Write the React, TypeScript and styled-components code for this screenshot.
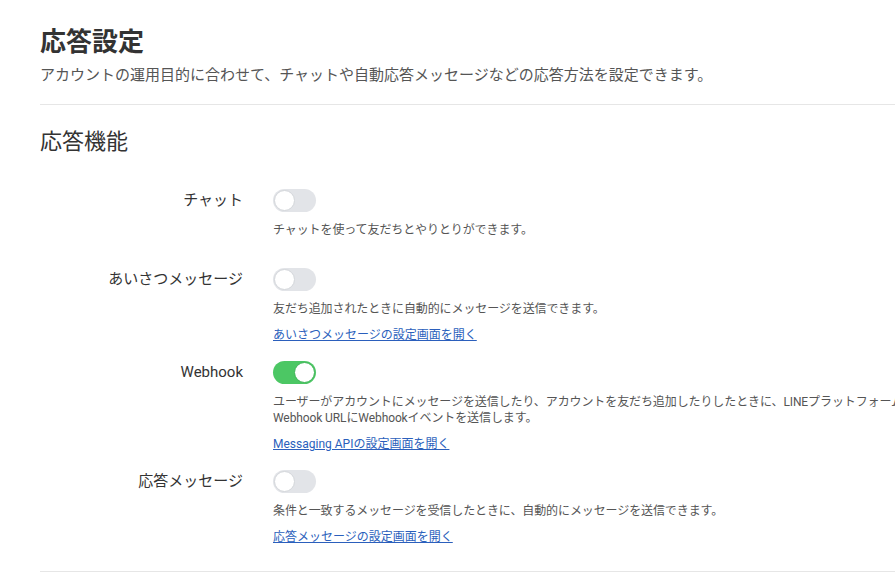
import styled, { createGlobalStyle } from 'styled-components'

const GlobalStyle = createGlobalStyle`
    html, body {
        margin: 0;
        padding: 0;
        background: #fff;
        overflow-x: hidden;
    }
    body {
        font-family: "Roboto", "Noto Sans CJK JP", sans-serif;
        color: #333;
    }
`

type Feature = {
    label: string
    enabled: boolean
    description: string
    link?: string
}

const features: Feature[] = [
    {
        label: 'チャット',
        enabled: false,
        description: 'チャットを使って友だちとやりとりができます。',
    },
    {
        label: 'あいさつメッセージ',
        enabled: false,
        description: '友だち追加されたときに自動的にメッセージを送信できます。',
        link: 'あいさつメッセージの設定画面を開く',
    },
    {
        label: 'Webhook',
        enabled: true,
        description:
            'ユーザーがアカウントにメッセージを送信したり、アカウントを友だち追加したりしたときに、LINEプラットフォームからWebhook URLにWebhookイベントを送信します。',
        link: 'Messaging APIの設定画面を開く',
    },
    {
        label: '応答メッセージ',
        enabled: false,
        description: '条件と一致するメッセージを受信したときに、自動的にメッセージを送信できます。',
        link: '応答メッセージの設定画面を開く',
    },
]

// Styles
const Page = styled.main`
    width: 1060px;
    padding: 24px 0 0 40px;
`

const Title = styled.h1`
    margin: 0;
    font-size: 26px;
    line-height: 36px;
    font-weight: 700;
    color: #333;
`

const Lead = styled.p`
    margin: 4px 0 0;
    font-size: 15px;
    line-height: 22px;
    color: #555;
`

const Divider = styled.hr`
    margin: 0;
    border: none;
    border-top: 1px solid #e6e6e6;
`

const HeaderDivider = styled(Divider)`
    margin-top: 18px;
`

const SectionTitle = styled.h2`
    margin: 22px 0 0;
    font-size: 22px;
    line-height: 30px;
    font-weight: 400;
    color: #333;
`

const FeatureList = styled.div`
    margin-top: 32px;
    padding-bottom: 24px;
    display: flex;
    flex-direction: column;
    gap: 16px;
`

const Row = styled.div`
    display: grid;
    grid-template-columns: 203px 1fr;
    column-gap: 30px;
`

const Label = styled.div`
    font-size: 15px;
    line-height: 23px;
    text-align: right;
    color: #333;
`

const Body = styled.div`
    display: flex;
    flex-direction: column;
    align-items: flex-start;
`

const Switch = styled.button<{ $on: boolean }>`
    position: relative;
    width: 43px;
    height: 23px;
    padding: 0;
    border: none;
    border-radius: 12px;
    cursor: pointer;
    background: ${p => (p.$on ? '#4cc764' : '#e2e4e8')};

    &::after {
        content: '';
        position: absolute;
        top: 1px;
        left: ${p => (p.$on ? '21px' : '1px')};
        width: 19px;
        height: 19px;
        border-radius: 50%;
        background: #fff;
        border: 1px solid ${p => (p.$on ? '#3fb457' : '#d3d6da')};
    }
`

const Description = styled.p<{ $hasLink: boolean }>`
    margin: 10px 0 ${p => (p.$hasLink ? '0' : '14px')};
    max-width: 700px;
    font-size: 12px;
    line-height: 16px;
    letter-spacing: -0.1px;
    color: #555;
`

const SettingsLink = styled.a`
    margin-top: 8px;
    font-size: 12px;
    line-height: 20px;
    color: #2b5fbc;
    text-decoration: underline;
    cursor: pointer;
`

export default function App() {
    return (
        <>
            <GlobalStyle />
            <Page>
                <Title>応答設定</Title>
                <Lead>アカウントの運用目的に合わせて、チャットや自動応答メッセージなどの応答方法を設定できます。</Lead>
                <HeaderDivider />

                <SectionTitle>応答機能</SectionTitle>

                <FeatureList>
                    {features.map(f => (
                        <Row key={f.label}>
                            <Label>{f.label}</Label>
                            <Body>
                                <Switch $on={f.enabled} aria-label={f.label} />
                                <Description $hasLink={!!f.link}>{f.description}</Description>
                                {f.link && <SettingsLink>{f.link}</SettingsLink>}
                            </Body>
                        </Row>
                    ))}
                </FeatureList>

                <Divider />
            </Page>
        </>
    )
}
